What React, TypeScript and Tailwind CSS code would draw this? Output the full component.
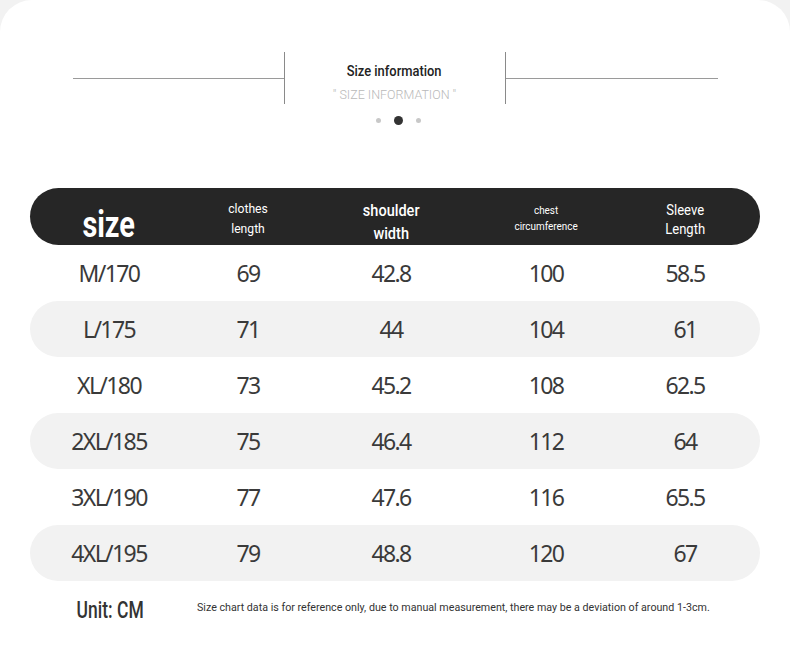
const ROWS = [
  ["M/170", "69", "42.8", "100", "58.5"],
  ["L/175", "71", "44", "104", "61"],
  ["XL/180", "73", "45.2", "108", "62.5"],
  ["2XL/185", "75", "46.4", "112", "64"],
  ["3XL/190", "77", "47.6", "116", "65.5"],
  ["4XL/195", "79", "48.8", "120", "67"],
];

const COLS = "grid grid-cols-[158px_120px_166px_144px_134px]";
const cond = "font-['Roboto',sans-serif]";

export default function App() {
  return (
    <div className="min-h-[654px] w-[790px] bg-[#f2f2f2]">
      <div className="h-[654px] rounded-t-[32px] bg-white pt-[52px]">
        {/* title */}
        <div className="flex items-center justify-center">
          <div className="h-px w-[211px] bg-[#9a9a9a]" />
          <div className="flex h-[52px] w-[222px] flex-col items-center border-x border-[#8a8a8a]">
            <div className={`${cond} mt-[10px] inline-block scale-x-[0.86] text-[15px] font-medium leading-[18px] text-[#222]`}>
              Size information
            </div>
            <div className="mt-[8px] font-['Roboto',sans-serif] text-[12.5px] font-light leading-[14px] text-[#b9b9b9]">
              " SIZE INFORMATION "
            </div>
          </div>
          <div className="h-px w-[212px] bg-[#9a9a9a]" />
        </div>
        <div className="mt-[12px] ml-[6px] flex items-center justify-center gap-[13px]">
          <span className="size-[5px] rounded-full bg-[#c8c8c8]" />
          <span className="size-[9px] rounded-full bg-[#333]" />
          <span className="size-[5px] rounded-full bg-[#c8c8c8]" />
        </div>

        {/* table */}
        <div className="mx-[30px] mt-[63px]">
          <div className={`${COLS} ${cond} h-[57px] items-center rounded-full bg-[#262626] text-center text-white`}>
            <div className="pt-[16px]">
              <span className="inline-block scale-x-[0.78] text-[37px] font-bold leading-none">size</span>
            </div>
            <div className="pt-[4px]">
              <span className="inline-block scale-x-[0.9] text-[13.5px] leading-[20px]">clothes<br />length</span>
            </div>
            <div className="pt-[11px]">
              <span className="inline-block scale-x-[0.88] text-[16.5px] font-medium leading-[23px]">shoulder<br />width</span>
            </div>
            <div className="pt-[6px]">
              <span className="inline-block scale-x-[0.9] text-[11px] leading-[16px]">chest<br />circumference</span>
            </div>
            <div className="pt-[8px]">
              <span className="inline-block scale-x-[0.9] text-[14.5px] leading-[19px]">Sleeve<br />Length</span>
            </div>
          </div>
          {ROWS.map((r, i) => (
            <div
              key={r[0]}
              className={`${COLS} h-[56px] items-center rounded-full text-center font-['Noto_Sans',sans-serif] text-[23px] font-normal tracking-[-0.07em] text-[#3a3a3a] ${
                i % 2 === 1 ? "bg-[#f2f2f2]" : ""
              }`}
            >
              {r.map((c, j) => (
                <div key={j}>{c}</div>
              ))}
            </div>
          ))}
          <div className="mt-[13px] flex items-center">
            <div className="w-[160px] text-center">
              <span className={`${cond} inline-block scale-x-[0.76] text-[23px] font-medium text-[#333]`}>Unit: CM</span>
            </div>
            <div
              className={`${cond} -mt-[7px] ml-[7px] origin-left scale-x-[0.93] whitespace-nowrap text-[11.5px] text-[#333]`}
            >
              Size chart data is for reference only, due to manual measurement, there may be a deviation of around 1-3cm.
            </div>
          </div>
        </div>
      </div>
    </div>
  );
}
